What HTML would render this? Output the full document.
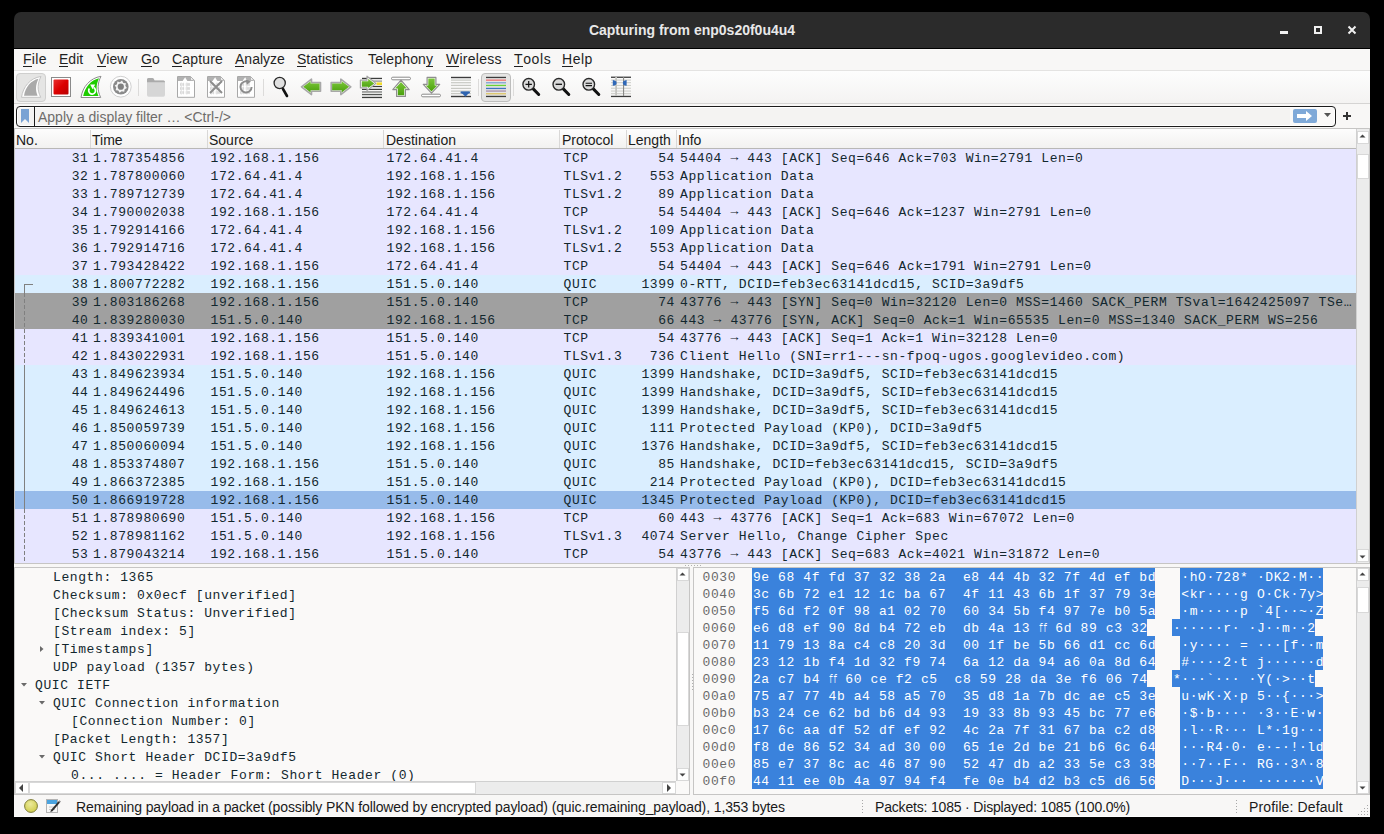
<!DOCTYPE html><html><head><meta charset="utf-8"><style>

*{box-sizing:border-box}
html,body{margin:0;padding:0}
body{width:1384px;height:834px;background:#000;position:relative;overflow:hidden;font-family:"Liberation Sans", sans-serif}
.a{position:absolute}
.m{font-family:"Liberation Mono", monospace;font-size:13px;letter-spacing:0.6px;white-space:pre;color:#12272e}
.s{font-family:"Liberation Sans", sans-serif;white-space:pre}
.row{position:absolute;left:15px;width:1341px;height:18px}
.row span{position:absolute;top:1px;line-height:18px}
.menu span{position:absolute;top:0;font-size:14px;color:#1f1f1f;line-height:20px}
.menu u{text-decoration:none;position:relative}.menu u::after{content:'';position:absolute;left:0;right:0;top:15px;height:1px;background:#1f1f1f}
.hdr span{position:absolute;top:0;font-size:14px;color:#1a1a1a;line-height:19px}
.arr{position:relative;top:-1px;font-weight:bold}
.vsep{position:absolute;width:1px;background:#d9d8d7}
.tsep{position:absolute;width:1px;height:18px;top:79px;background:#d6d5d4}
.sb{position:absolute;background:#ececec;border-left:1px solid #d0d0d0}
.btn{position:absolute;background:#fff;border:1px solid #d8d8d8}
.dl span{position:absolute;line-height:18px}
.hx{position:absolute;line-height:17px}

</style></head><body>
<div class="a" style="left:14px;top:48px;width:1356px;height:769px;background:#f8f7f6"></div>
<div class="a" style="left:14px;top:12px;width:1356px;height:37px;background:#2b2b2b;border-radius:7px 7px 0 0"></div>
<div class="a" style="left:14px;top:48px;width:1356px;height:1px;background:#000"></div>
<div class="a s" style="left:14px;top:20px;width:1356px;text-align:center;color:#e8e8e8;font-weight:bold;font-size:14px;line-height:20px">Capturing from enp0s20f0u4u4</div>
<div class="a" style="left:1280px;top:31px;width:8px;height:3px;background:#f0f0f0"></div>
<div class="a" style="left:1314px;top:26px;width:8px;height:8px;border:2px solid #f0f0f0"></div>
<svg class="a" style="left:1347px;top:25px" width="10" height="10"><path d="M1.5 1.5L8.5 8.5M8.5 1.5L1.5 8.5" stroke="#f0f0f0" stroke-width="2"/></svg>
<div class="a menu s" style="left:0;top:49px;width:1384px;height:21px">
<span style="left:23px;letter-spacing:0.3px"><u>F</u>ile</span>
<span style="left:59px;letter-spacing:0px"><u>E</u>dit</span>
<span style="left:97px;letter-spacing:0px"><u>V</u>iew</span>
<span style="left:141px;letter-spacing:0px"><u>G</u>o</span>
<span style="left:172px;letter-spacing:0.18px"><u>C</u>apture</span>
<span style="left:235px;letter-spacing:0px"><u>A</u>nalyze</span>
<span style="left:297px;letter-spacing:0px"><u>S</u>tatistics</span>
<span style="left:368px;letter-spacing:0.15px">Telephon<u>y</u></span>
<span style="left:446px;letter-spacing:0.25px"><u>W</u>ireless</span>
<span style="left:514px;letter-spacing:0.6px"><u>T</u>ools</span>
<span style="left:562px;letter-spacing:0.5px"><u>H</u>elp</span>
</div>
<div class="a" style="left:14px;top:70px;width:1356px;height:1px;background:#e4e3e2"></div>
<div class="a" style="left:14px;top:71px;width:1356px;height:32px;background:linear-gradient(#fdfdfd,#f4f3f2)"></div>
<div class="a" style="left:14px;top:103px;width:1356px;height:1px;background:#d5d4d3"></div>
<svg class="a" style="left:0;top:0" width="700" height="110" viewBox="0 0 700 110">
<defs><linearGradient id="gr" x1="0" y1="0" x2="0" y2="1"><stop offset="0" stop-color="#7bc63a"/><stop offset="1" stop-color="#4aa00c"/></linearGradient><linearGradient id="rd" x1="0" y1="0" x2="1" y2="1"><stop offset="0" stop-color="#e83030"/><stop offset="0.5" stop-color="#dc0000"/><stop offset="1" stop-color="#b80000"/></linearGradient></defs>
<rect x="16.5" y="73.5" width="29" height="28" rx="3.5" fill="#e5e5e4" stroke="#cfcfce"/>
<path d="M21.5 97.3C23 87 30 78 41 76.5C37.5 83 37 90 40.7 97.3Z" fill="#fff" stroke="#c4c4c4" stroke-width="1"/>
<path d="M24 95.8C25.5 87 31 80.5 38.5 78.8C35.5 85 35.3 90 37.6 95.8Z" fill="#aaa"/>
<rect x="51.5" y="77.5" width="19" height="19" fill="#fff" stroke="#8a8a8a"/>
<rect x="53.5" y="79.5" width="15" height="15" rx="1" fill="url(#rd)"/>
<path d="M81 97.5C82.5 87 90 78 101 76.3C97.5 83 97 90 100.7 97.5Z" fill="#fff" stroke="#8c8c8c" stroke-width="1"/>
<path d="M83.2 96C85 87 91 80 99 78.2C96 85 95.8 90 98.5 96Z" fill="#1ecc00"/>
<path d="M89.4 88.6A3.4 3.4 0 1 0 93.6 87.6" stroke="#fff" stroke-width="1.7" fill="none"/>
<path d="M90.2 84.6L95.2 84.4L92.6 89.2Z" fill="#fff"/>
<circle cx="120.8" cy="86.7" r="10.4" fill="#fff" stroke="#cfcfcf" stroke-width="1"/>
<circle cx="120.8" cy="86.7" r="7.8" fill="#8a8a8a"/>
<path d="M126.88 87.91 L124.62 89.26 L124.24 91.86 L121.70 91.21 L119.59 92.78 L118.24 90.52 L115.64 90.14 L116.29 87.60 L114.72 85.49 L116.98 84.14 L117.36 81.54 L119.90 82.19 L122.01 80.62 L123.36 82.88 L125.96 83.26 L125.31 85.80Z" fill="#f4f4f4"/>
<circle cx="120.8" cy="86.7" r="3.1" fill="#808080"/>
<rect x="138.0" y="79" width="1" height="17" fill="#dcdbda"/>
<rect x="263.0" y="79" width="1" height="17" fill="#dcdbda"/>
<rect x="478.0" y="79" width="1" height="17" fill="#dcdbda"/>
<rect x="513.0" y="79" width="1" height="17" fill="#dcdbda"/>
<path d="M147 79.5Q147 78 148.5 78H152.5Q154 78 154.5 80.5H163.5Q165 80.5 165 82V95Q165 96.7 163.3 96.7H148.7Q147 96.7 147 95Z" fill="#d6d6d6"/>
<path d="M147 79.5Q147 78 148.5 78H152.5Q154 78 154.5 80.5H163.5Q165 80.5 165 82V82.3H147Z" fill="#ababab"/>
<path d="M177.5 76.5H190.5L194.5 80.5V97.3H177.5Z" fill="#fff" stroke="#a8a8a8" stroke-width="1"/><path d="M178.0 77H190.2L194.0 81H178.0Z" fill="#b2b2b2"/><path d="M182.5 81.2C183.5 79 184.5 78.5 185.3 77.2C185.6 78.5 186.5 79.5 187.5 81.2Z" fill="#fff"/><path d="M190.5 76.8V80.2H194.2Z" fill="#fff" stroke="#a8a8a8" stroke-width="0.8" stroke-linejoin="round"/><rect x="180.5" y="83.0" width="1.4" height="3" rx="0.6" fill="none" stroke="#d2d2d2" stroke-width="0.9"/><rect x="183.0" y="83.0" width="0.6" height="3" rx="0.6" fill="none" stroke="#d2d2d2" stroke-width="0.9"/><rect x="186.2" y="83.0" width="1.4" height="3" rx="0.6" fill="none" stroke="#d2d2d2" stroke-width="0.9"/><rect x="188.7" y="83.0" width="0.6" height="3" rx="0.6" fill="none" stroke="#d2d2d2" stroke-width="0.9"/><rect x="180.5" y="87.0" width="1.4" height="3" rx="0.6" fill="none" stroke="#d2d2d2" stroke-width="0.9"/><rect x="183.0" y="87.0" width="0.6" height="3" rx="0.6" fill="none" stroke="#d2d2d2" stroke-width="0.9"/><rect x="186.2" y="87.0" width="1.4" height="3" rx="0.6" fill="none" stroke="#d2d2d2" stroke-width="0.9"/><rect x="188.7" y="87.0" width="0.6" height="3" rx="0.6" fill="none" stroke="#d2d2d2" stroke-width="0.9"/><rect x="180.5" y="91.0" width="1.4" height="3" rx="0.6" fill="none" stroke="#d2d2d2" stroke-width="0.9"/><rect x="183.0" y="91.0" width="0.6" height="3" rx="0.6" fill="none" stroke="#d2d2d2" stroke-width="0.9"/><rect x="186.2" y="91.0" width="1.4" height="3" rx="0.6" fill="none" stroke="#d2d2d2" stroke-width="0.9"/><rect x="188.7" y="91.0" width="0.6" height="3" rx="0.6" fill="none" stroke="#d2d2d2" stroke-width="0.9"/>
<path d="M207.5 76.5H220.5L224.5 80.5V97.3H207.5Z" fill="#fff" stroke="#a8a8a8" stroke-width="1"/><path d="M208.0 77H220.2L224.0 81H208.0Z" fill="#b2b2b2"/><path d="M212.5 81.2C213.5 79 214.5 78.5 215.3 77.2C215.6 78.5 216.5 79.5 217.5 81.2Z" fill="#fff"/><path d="M220.5 76.8V80.2H224.2Z" fill="#fff" stroke="#a8a8a8" stroke-width="0.8" stroke-linejoin="round"/><rect x="210.5" y="83.0" width="1.4" height="3" rx="0.6" fill="none" stroke="#d2d2d2" stroke-width="0.9"/><rect x="213.0" y="83.0" width="0.6" height="3" rx="0.6" fill="none" stroke="#d2d2d2" stroke-width="0.9"/><rect x="216.2" y="83.0" width="1.4" height="3" rx="0.6" fill="none" stroke="#d2d2d2" stroke-width="0.9"/><rect x="218.7" y="83.0" width="0.6" height="3" rx="0.6" fill="none" stroke="#d2d2d2" stroke-width="0.9"/><rect x="210.5" y="87.0" width="1.4" height="3" rx="0.6" fill="none" stroke="#d2d2d2" stroke-width="0.9"/><rect x="213.0" y="87.0" width="0.6" height="3" rx="0.6" fill="none" stroke="#d2d2d2" stroke-width="0.9"/><rect x="216.2" y="87.0" width="1.4" height="3" rx="0.6" fill="none" stroke="#d2d2d2" stroke-width="0.9"/><rect x="218.7" y="87.0" width="0.6" height="3" rx="0.6" fill="none" stroke="#d2d2d2" stroke-width="0.9"/><rect x="210.5" y="91.0" width="1.4" height="3" rx="0.6" fill="none" stroke="#d2d2d2" stroke-width="0.9"/><rect x="213.0" y="91.0" width="0.6" height="3" rx="0.6" fill="none" stroke="#d2d2d2" stroke-width="0.9"/><rect x="216.2" y="91.0" width="1.4" height="3" rx="0.6" fill="none" stroke="#d2d2d2" stroke-width="0.9"/><rect x="218.7" y="91.0" width="0.6" height="3" rx="0.6" fill="none" stroke="#d2d2d2" stroke-width="0.9"/><path d="M210 81L222 93M222 81L210 93" stroke="#8c8c8c" stroke-width="2"/>
<path d="M237.5 76.5H250.5L254.5 80.5V97.3H237.5Z" fill="#fff" stroke="#a8a8a8" stroke-width="1"/><path d="M238.0 77H250.2L254.0 81H238.0Z" fill="#b2b2b2"/><path d="M242.5 81.2C243.5 79 244.5 78.5 245.3 77.2C245.6 78.5 246.5 79.5 247.5 81.2Z" fill="#fff"/><path d="M250.5 76.8V80.2H254.2Z" fill="#fff" stroke="#a8a8a8" stroke-width="0.8" stroke-linejoin="round"/><rect x="240.5" y="83.0" width="1.4" height="3" rx="0.6" fill="none" stroke="#d2d2d2" stroke-width="0.9"/><rect x="243.0" y="83.0" width="0.6" height="3" rx="0.6" fill="none" stroke="#d2d2d2" stroke-width="0.9"/><rect x="246.2" y="83.0" width="1.4" height="3" rx="0.6" fill="none" stroke="#d2d2d2" stroke-width="0.9"/><rect x="248.7" y="83.0" width="0.6" height="3" rx="0.6" fill="none" stroke="#d2d2d2" stroke-width="0.9"/><rect x="240.5" y="87.0" width="1.4" height="3" rx="0.6" fill="none" stroke="#d2d2d2" stroke-width="0.9"/><rect x="243.0" y="87.0" width="0.6" height="3" rx="0.6" fill="none" stroke="#d2d2d2" stroke-width="0.9"/><rect x="246.2" y="87.0" width="1.4" height="3" rx="0.6" fill="none" stroke="#d2d2d2" stroke-width="0.9"/><rect x="248.7" y="87.0" width="0.6" height="3" rx="0.6" fill="none" stroke="#d2d2d2" stroke-width="0.9"/><rect x="240.5" y="91.0" width="1.4" height="3" rx="0.6" fill="none" stroke="#d2d2d2" stroke-width="0.9"/><rect x="243.0" y="91.0" width="0.6" height="3" rx="0.6" fill="none" stroke="#d2d2d2" stroke-width="0.9"/><rect x="246.2" y="91.0" width="1.4" height="3" rx="0.6" fill="none" stroke="#d2d2d2" stroke-width="0.9"/><rect x="248.7" y="91.0" width="0.6" height="3" rx="0.6" fill="none" stroke="#d2d2d2" stroke-width="0.9"/><path d="M249 82.2A5.6 5.6 0 1 0 251.6 87" stroke="#8c8c8c" stroke-width="2" fill="none"/><path d="M245.8 79.5L251 81.5L246.8 84.8Z" fill="#8c8c8c"/>
<path d="M283 89L287 96" stroke="#111" stroke-width="2.6" stroke-linecap="round"/>
<circle cx="279.7" cy="83" r="5.6" fill="#e0e0e0" stroke="#2a2a2a" stroke-width="1.3"/>
<path d="M301.5 86.8L311.5 79.2V82.6H320.5V91.2H311.5V94.6Z" fill="#fff" stroke="#a8a8a8" stroke-width="1.6" stroke-linejoin="round"/>
<path d="M303.2 86.8L310.6 81.2V83.5H319.6V90.3H310.6V92.6Z" fill="url(#gr)"/>
<path d="M350.8 86.8L340.8 79.2V82.6H331.2V91.2H340.8V94.6Z" fill="#fff" stroke="#a8a8a8" stroke-width="1.6" stroke-linejoin="round"/>
<path d="M349.1 86.8L341.7 81.2V83.5H332.1V90.3H341.7V92.6Z" fill="url(#gr)"/>
<rect x="362" y="77.8" width="20" height="1.3" fill="#3c3e3c"/>
<rect x="362" y="80.5" width="20" height="1.2" fill="#8c8e8c"/>
<rect x="362" y="85.9" width="20" height="1.2" fill="#3c3e3c"/>
<rect x="362" y="88.8" width="20" height="1.2" fill="#3c3e3c"/>
<rect x="362" y="91.2" width="20" height="1.5" fill="#8a8c8a"/>
<rect x="362" y="93.9" width="20" height="1.3" fill="#555755"/>
<rect x="362" y="96.8" width="20" height="1.3" fill="#3c3e3c"/>
<rect x="376.5" y="82.4" width="5.5" height="2.6" fill="#f2dc2a"/>
<path d="M360.4 80.2H367V76.2L375.9 83.4L367 90.6V87.9H360.4Z" fill="#fff" stroke="#a4a4a4" stroke-width="1.2" stroke-linejoin="round"/>
<path d="M361.8 81.3H368.2V78.8L374.2 83.4L368.2 88.1V86.7H361.8Z" fill="url(#gr)"/>
<rect x="391.5" y="77.2" width="19" height="2.6" rx="1.3" fill="#fff" stroke="#8a8a8a" stroke-width="1"/>
<path d="M401 80.2L409.2 89.6H405.4V96.4H396.6V89.6H392.8Z" fill="#fff" stroke="#8e8e8e" stroke-width="1.2" stroke-linejoin="round"/>
<path d="M401 82L406.8 88.6H404.2V95.2H397.8V88.6H395.2Z" fill="url(#gr)"/>
<path d="M431.5 93.2L439.7 84.4H435.9V77.4H427.1V84.4H423.3Z" fill="#fff" stroke="#8e8e8e" stroke-width="1.2" stroke-linejoin="round"/>
<path d="M431.5 91.6L437.3 85.4H434.7V78.6H428.3V85.4H425.7Z" fill="url(#gr)"/>
<rect x="421.5" y="94.2" width="19" height="2.6" rx="1.3" fill="#fff" stroke="#8a8a8a" stroke-width="1"/>
<rect x="451" y="76.8" width="20" height="1.4" fill="#3c3c3c"/>
<rect x="451" y="79.5" width="20" height="1.2" fill="#c8c9c4"/>
<rect x="451" y="82.1" width="20" height="1.2" fill="#c8c9c4"/>
<rect x="451" y="84.8" width="20" height="1.2" fill="#c8c9c4"/>
<rect x="451" y="87.8" width="20" height="1.2" fill="#c8c9c4"/>
<rect x="451" y="90.5" width="20" height="1.2" fill="#c8c9c4"/>
<rect x="451" y="93.0" width="20" height="1.2" fill="#c8c9c4"/>
<rect x="451" y="95.8" width="20" height="1.4" fill="#3c3c3c"/>
<path d="M460.5 91.8H470L465.5 96.8Z" fill="#2f64b0"/><rect x="460.5" y="91.6" width="9.5" height="2" rx="1" fill="#2f64b0"/>
<rect x="481.5" y="73.5" width="29" height="28" rx="3.5" fill="#e5e5e4" stroke="#bdbdbc"/>
<rect x="486" y="76.8" width="20" height="1.3" fill="#3c3c3c"/>
<rect x="486" y="79.5" width="20" height="1.3" fill="#f07070"/>
<rect x="486" y="82.1" width="20" height="1.3" fill="#80a4d4"/>
<rect x="486" y="84.8" width="20" height="1.3" fill="#6ad336"/>
<rect x="486" y="87.8" width="20" height="1.3" fill="#3e74c0"/>
<rect x="486" y="90.4" width="20" height="1.3" fill="#a68fae"/>
<rect x="486" y="93.1" width="20" height="1.3" fill="#dcc464"/>
<rect x="486" y="95.8" width="20" height="1.3" fill="#3c3c3c"/>
<path d="M533.2 88.9L538.7 94.5" stroke="#111" stroke-width="3" stroke-linecap="round"/>
<circle cx="528.7" cy="84.3" r="5.8" fill="#dadada" stroke="#2a2a2a" stroke-width="1.4"/>
<path d="M525.5 84.3H531.9M528.7 81V87.6" stroke="#111" stroke-width="1.2"/>
<path d="M563.3 88.9L568.8 94.5" stroke="#111" stroke-width="3" stroke-linecap="round"/>
<circle cx="558.8" cy="84.3" r="5.8" fill="#dadada" stroke="#2a2a2a" stroke-width="1.4"/>
<path d="M555.6 84.3H562.0" stroke="#111" stroke-width="1.3"/>
<path d="M593.3 88.9L598.8 94.5" stroke="#111" stroke-width="3" stroke-linecap="round"/>
<circle cx="588.8" cy="84.3" r="5.8" fill="#dadada" stroke="#2a2a2a" stroke-width="1.4"/>
<path d="M585.6 83.2H592.0M585.6 85.6H592.0" stroke="#111" stroke-width="1.1"/>
<rect x="611" y="76.6" width="20" height="1.3" fill="#3c3c3c"/>
<rect x="611" y="79.5" width="20" height="1.1" fill="#cfd0cb"/>
<rect x="611" y="82.1" width="20" height="1.1" fill="#cfd0cb"/>
<rect x="611" y="84.9" width="20" height="1.1" fill="#cfd0cb"/>
<rect x="611" y="87.7" width="20" height="1.1" fill="#cfd0cb"/>
<rect x="611" y="90.5" width="20" height="1.1" fill="#cfd0cb"/>
<rect x="611" y="93.1" width="20" height="1.1" fill="#cfd0cb"/>
<rect x="611" y="95.8" width="20" height="1.3" fill="#3c3c3c"/>
<rect x="615.2" y="77" width="1.8" height="19" fill="#c4c4c0"/><rect x="623" y="77" width="1.1" height="19" fill="#8a8a88"/>
<path d="M612.8 80Q616.6 80.6 616.6 82.9Q616.6 85.2 612.8 85.8Z" fill="#2f68b8"/><path d="M626.6 80Q622.8 80.6 622.8 82.9Q622.8 85.2 626.6 85.8Z" fill="#2f68b8"/>
</svg>
<div class="a" style="left:16px;top:106px;width:1320px;height:21px;border:1px solid #1c1c1c;border-radius:4px;background:#f4f3f2;box-shadow:inset 0 0 0 1px #fff"></div>
<div class="a" style="left:1290px;top:108px;width:44px;height:17px;background:#faf9f8"></div>
<div class="a" style="left:34px;top:107px;width:1px;height:19px;background:#1c1c1c"></div>
<svg class="a" style="left:20px;top:109px" width="10" height="15"><path d="M1 0H9V14L5 10L1 14Z" fill="#7aa3d4"/></svg>
<div class="a s" style="left:38px;top:108px;font-size:14px;line-height:19px;color:#6e6c6a">Apply a display filter … &lt;Ctrl-/&gt;</div>
<div class="a" style="left:1293px;top:109px;width:24px;height:14px;background:#7fa9d8;border-radius:2px"></div>
<svg class="a" style="left:1293px;top:109px" width="24" height="14"><path d="M4 5H13V2L19 7L13 12V9H4Z" fill="#fff"/></svg>
<svg class="a" style="left:1324px;top:113px" width="8" height="5"><path d="M0 0H7L3.5 4Z" fill="#555"/></svg>
<svg class="a" style="left:1342px;top:111px" width="10" height="10"><path d="M5 1V9M1 5H9" stroke="#333" stroke-width="2"/></svg>
<div class="a" style="left:14px;top:128px;width:1356px;height:436px;background:#fff;border:1px solid #c6c5c4"></div>
<div class="a" style="left:15px;top:129px;width:1341px;height:20px;background:linear-gradient(#fdfdfd,#f2f1f0);border-bottom:1px solid #b8b7b6"></div>
<div class="a hdr s" style="left:0;top:131px;width:1384px;height:18px">
<span style="left:16px">No.</span>
<span style="left:92px">Time</span>
<span style="left:209px">Source</span>
<span style="left:386px">Destination</span>
<span style="left:562px">Protocol</span>
<span style="left:628px">Length</span>
<span style="left:678px">Info</span>
</div>
<div class="vsep" style="left:90px;top:130px;height:18px"></div>
<div class="vsep" style="left:207px;top:130px;height:18px"></div>
<div class="vsep" style="left:383px;top:130px;height:18px"></div>
<div class="vsep" style="left:559px;top:130px;height:18px"></div>
<div class="vsep" style="left:626px;top:130px;height:18px"></div>
<div class="vsep" style="left:676px;top:130px;height:18px"></div>
<div class="row m" style="top:149px;background:#e7e6ff">
<span style="right:1267.5px">31</span>
<span style="left:78.0px">1.787354856</span>
<span style="left:195.5px">192.168.1.156</span>
<span style="left:371.5px">172.64.41.4</span>
<span style="left:548.5px">TCP</span>
<span style="right:681.0px">54</span>
<span style="left:665.0px">54404 <b class="arr">→</b> 443 [ACK] Seq=646 Ack=703 Win=2791 Len=0</span>
</div>
<div class="row m" style="top:167px;background:#e7e6ff">
<span style="right:1267.5px">32</span>
<span style="left:78.0px">1.787800060</span>
<span style="left:195.5px">172.64.41.4</span>
<span style="left:371.5px">192.168.1.156</span>
<span style="left:548.5px">TLSv1.2</span>
<span style="right:681.0px">553</span>
<span style="left:665.0px">Application Data</span>
</div>
<div class="row m" style="top:185px;background:#e7e6ff">
<span style="right:1267.5px">33</span>
<span style="left:78.0px">1.789712739</span>
<span style="left:195.5px">172.64.41.4</span>
<span style="left:371.5px">192.168.1.156</span>
<span style="left:548.5px">TLSv1.2</span>
<span style="right:681.0px">89</span>
<span style="left:665.0px">Application Data</span>
</div>
<div class="row m" style="top:203px;background:#e7e6ff">
<span style="right:1267.5px">34</span>
<span style="left:78.0px">1.790002038</span>
<span style="left:195.5px">192.168.1.156</span>
<span style="left:371.5px">172.64.41.4</span>
<span style="left:548.5px">TCP</span>
<span style="right:681.0px">54</span>
<span style="left:665.0px">54404 <b class="arr">→</b> 443 [ACK] Seq=646 Ack=1237 Win=2791 Len=0</span>
</div>
<div class="row m" style="top:221px;background:#e7e6ff">
<span style="right:1267.5px">35</span>
<span style="left:78.0px">1.792914166</span>
<span style="left:195.5px">172.64.41.4</span>
<span style="left:371.5px">192.168.1.156</span>
<span style="left:548.5px">TLSv1.2</span>
<span style="right:681.0px">109</span>
<span style="left:665.0px">Application Data</span>
</div>
<div class="row m" style="top:239px;background:#e7e6ff">
<span style="right:1267.5px">36</span>
<span style="left:78.0px">1.792914716</span>
<span style="left:195.5px">172.64.41.4</span>
<span style="left:371.5px">192.168.1.156</span>
<span style="left:548.5px">TLSv1.2</span>
<span style="right:681.0px">553</span>
<span style="left:665.0px">Application Data</span>
</div>
<div class="row m" style="top:257px;background:#e7e6ff">
<span style="right:1267.5px">37</span>
<span style="left:78.0px">1.793428422</span>
<span style="left:195.5px">192.168.1.156</span>
<span style="left:371.5px">172.64.41.4</span>
<span style="left:548.5px">TCP</span>
<span style="right:681.0px">54</span>
<span style="left:665.0px">54404 <b class="arr">→</b> 443 [ACK] Seq=646 Ack=1791 Win=2791 Len=0</span>
</div>
<div class="row m" style="top:275px;background:#daeeff">
<span style="right:1267.5px">38</span>
<span style="left:78.0px">1.800772282</span>
<span style="left:195.5px">192.168.1.156</span>
<span style="left:371.5px">151.5.0.140</span>
<span style="left:548.5px">QUIC</span>
<span style="right:681.0px">1399</span>
<span style="left:665.0px">0-RTT, DCID=feb3ec63141dcd15, SCID=3a9df5</span>
</div>
<div class="row m" style="top:293px;background:#a0a0a0">
<span style="right:1267.5px">39</span>
<span style="left:78.0px">1.803186268</span>
<span style="left:195.5px">192.168.1.156</span>
<span style="left:371.5px">151.5.0.140</span>
<span style="left:548.5px">TCP</span>
<span style="right:681.0px">74</span>
<span style="left:665.0px">43776 <b class="arr">→</b> 443 [SYN] Seq=0 Win=32120 Len=0 MSS=1460 SACK_PERM TSval=1642425097 TSe…</span>
</div>
<div class="row m" style="top:311px;background:#a0a0a0">
<span style="right:1267.5px">40</span>
<span style="left:78.0px">1.839280030</span>
<span style="left:195.5px">151.5.0.140</span>
<span style="left:371.5px">192.168.1.156</span>
<span style="left:548.5px">TCP</span>
<span style="right:681.0px">66</span>
<span style="left:665.0px">443 <b class="arr">→</b> 43776 [SYN, ACK] Seq=0 Ack=1 Win=65535 Len=0 MSS=1340 SACK_PERM WS=256</span>
</div>
<div class="row m" style="top:329px;background:#e7e6ff">
<span style="right:1267.5px">41</span>
<span style="left:78.0px">1.839341001</span>
<span style="left:195.5px">192.168.1.156</span>
<span style="left:371.5px">151.5.0.140</span>
<span style="left:548.5px">TCP</span>
<span style="right:681.0px">54</span>
<span style="left:665.0px">43776 <b class="arr">→</b> 443 [ACK] Seq=1 Ack=1 Win=32128 Len=0</span>
</div>
<div class="row m" style="top:347px;background:#e7e6ff">
<span style="right:1267.5px">42</span>
<span style="left:78.0px">1.843022931</span>
<span style="left:195.5px">192.168.1.156</span>
<span style="left:371.5px">151.5.0.140</span>
<span style="left:548.5px">TLSv1.3</span>
<span style="right:681.0px">736</span>
<span style="left:665.0px">Client Hello (SNI=rr1---sn-fpoq-ugos.googlevideo.com)</span>
</div>
<div class="row m" style="top:365px;background:#daeeff">
<span style="right:1267.5px">43</span>
<span style="left:78.0px">1.849623934</span>
<span style="left:195.5px">151.5.0.140</span>
<span style="left:371.5px">192.168.1.156</span>
<span style="left:548.5px">QUIC</span>
<span style="right:681.0px">1399</span>
<span style="left:665.0px">Handshake, DCID=3a9df5, SCID=feb3ec63141dcd15</span>
</div>
<div class="row m" style="top:383px;background:#daeeff">
<span style="right:1267.5px">44</span>
<span style="left:78.0px">1.849624496</span>
<span style="left:195.5px">151.5.0.140</span>
<span style="left:371.5px">192.168.1.156</span>
<span style="left:548.5px">QUIC</span>
<span style="right:681.0px">1399</span>
<span style="left:665.0px">Handshake, DCID=3a9df5, SCID=feb3ec63141dcd15</span>
</div>
<div class="row m" style="top:401px;background:#daeeff">
<span style="right:1267.5px">45</span>
<span style="left:78.0px">1.849624613</span>
<span style="left:195.5px">151.5.0.140</span>
<span style="left:371.5px">192.168.1.156</span>
<span style="left:548.5px">QUIC</span>
<span style="right:681.0px">1399</span>
<span style="left:665.0px">Handshake, DCID=3a9df5, SCID=feb3ec63141dcd15</span>
</div>
<div class="row m" style="top:419px;background:#daeeff">
<span style="right:1267.5px">46</span>
<span style="left:78.0px">1.850059739</span>
<span style="left:195.5px">151.5.0.140</span>
<span style="left:371.5px">192.168.1.156</span>
<span style="left:548.5px">QUIC</span>
<span style="right:681.0px">111</span>
<span style="left:665.0px">Protected Payload (KP0), DCID=3a9df5</span>
</div>
<div class="row m" style="top:437px;background:#daeeff">
<span style="right:1267.5px">47</span>
<span style="left:78.0px">1.850060094</span>
<span style="left:195.5px">151.5.0.140</span>
<span style="left:371.5px">192.168.1.156</span>
<span style="left:548.5px">QUIC</span>
<span style="right:681.0px">1376</span>
<span style="left:665.0px">Handshake, DCID=3a9df5, SCID=feb3ec63141dcd15</span>
</div>
<div class="row m" style="top:455px;background:#daeeff">
<span style="right:1267.5px">48</span>
<span style="left:78.0px">1.853374807</span>
<span style="left:195.5px">192.168.1.156</span>
<span style="left:371.5px">151.5.0.140</span>
<span style="left:548.5px">QUIC</span>
<span style="right:681.0px">85</span>
<span style="left:665.0px">Handshake, DCID=feb3ec63141dcd15, SCID=3a9df5</span>
</div>
<div class="row m" style="top:473px;background:#daeeff">
<span style="right:1267.5px">49</span>
<span style="left:78.0px">1.866372385</span>
<span style="left:195.5px">192.168.1.156</span>
<span style="left:371.5px">151.5.0.140</span>
<span style="left:548.5px">QUIC</span>
<span style="right:681.0px">214</span>
<span style="left:665.0px">Protected Payload (KP0), DCID=feb3ec63141dcd15</span>
</div>
<div class="row m" style="top:491px;background:#97bbea">
<span style="right:1267.5px">50</span>
<span style="left:78.0px">1.866919728</span>
<span style="left:195.5px">192.168.1.156</span>
<span style="left:371.5px">151.5.0.140</span>
<span style="left:548.5px">QUIC</span>
<span style="right:681.0px">1345</span>
<span style="left:665.0px">Protected Payload (KP0), DCID=feb3ec63141dcd15</span>
</div>
<div class="row m" style="top:509px;background:#e7e6ff">
<span style="right:1267.5px">51</span>
<span style="left:78.0px">1.878980690</span>
<span style="left:195.5px">151.5.0.140</span>
<span style="left:371.5px">192.168.1.156</span>
<span style="left:548.5px">TCP</span>
<span style="right:681.0px">60</span>
<span style="left:665.0px">443 <b class="arr">→</b> 43776 [ACK] Seq=1 Ack=683 Win=67072 Len=0</span>
</div>
<div class="row m" style="top:527px;background:#e7e6ff">
<span style="right:1267.5px">52</span>
<span style="left:78.0px">1.878981162</span>
<span style="left:195.5px">151.5.0.140</span>
<span style="left:371.5px">192.168.1.156</span>
<span style="left:548.5px">TLSv1.3</span>
<span style="right:681.0px">4074</span>
<span style="left:665.0px">Server Hello, Change Cipher Spec</span>
</div>
<div class="row m" style="top:545px;background:#e7e6ff">
<span style="right:1267.5px">53</span>
<span style="left:78.0px">1.879043214</span>
<span style="left:195.5px">192.168.1.156</span>
<span style="left:371.5px">151.5.0.140</span>
<span style="left:548.5px">TCP</span>
<span style="right:681.0px">54</span>
<span style="left:665.0px">43776 <b class="arr">→</b> 443 [ACK] Seq=683 Ack=4021 Win=31872 Len=0</span>
</div>
<svg class="a" style="left:15px;top:149px" width="20" height="414">
<path d="M9.5 135.5H18M9.5 135V144" stroke="#808080" stroke-width="1" fill="none"/>
<path d="M9.5 144V216" stroke="#808080" stroke-width="1" stroke-dasharray="4 2" fill="none"/>
<path d="M9.5 216V360" stroke="#808080" stroke-width="1" fill="none"/>
<path d="M9.5 360V414" stroke="#808080" stroke-width="1" stroke-dasharray="4 2" fill="none"/>
</svg>
<div class="sb" style="left:1356px;top:129px;width:13px;height:434px"></div>
<div class="btn" style="left:1357px;top:131px;width:12px;height:13px"></div>
<svg class="a" style="left:1359px;top:134px" width="7" height="4"><path d="M0.5 3.5H6.5L3.5 0.5Z" fill="#444"/></svg>
<div class="btn" style="left:1357px;top:154px;width:12px;height:25px"></div>
<div class="btn" style="left:1357px;top:549px;width:12px;height:13px"></div>
<svg class="a" style="left:1359px;top:555px" width="7" height="4"><path d="M0.5 0.5H6.5L3.5 3.5Z" fill="#444"/></svg>
<div class="a" style="left:14px;top:564px;width:1356px;height:3px;background:#f8f7f6"></div>
<div class="a" style="left:685px;top:565px;width:1px;height:1px;background:#b0b0b0"></div>
<div class="a" style="left:688px;top:565px;width:1px;height:1px;background:#b0b0b0"></div>
<div class="a" style="left:691px;top:565px;width:1px;height:1px;background:#b0b0b0"></div>
<div class="a" style="left:694px;top:565px;width:1px;height:1px;background:#b0b0b0"></div>
<div class="a" style="left:697px;top:565px;width:1px;height:1px;background:#b0b0b0"></div>
<div class="a" style="left:700px;top:565px;width:1px;height:1px;background:#b0b0b0"></div>
<div class="a" style="left:14px;top:567px;width:676px;height:228px;background:#faf9f8;border:1px solid #c6c5c4"></div>
<div class="a dl m" style="left:0;top:0;width:676px;height:781px;overflow:hidden">
<span style="left:53px;top:569px">Length: 1365</span>
<span style="left:53px;top:587px">Checksum: 0x0ecf [unverified]</span>
<span style="left:53px;top:605px">[Checksum Status: Unverified]</span>
<span style="left:53px;top:623px">[Stream index: 5]</span>
<span style="left:53px;top:641px">[Timestamps]</span>
<span style="left:53px;top:659px">UDP payload (1357 bytes)</span>
<span style="left:35px;top:677px">QUIC IETF</span>
<span style="left:53px;top:695px">QUIC Connection information</span>
<span style="left:71px;top:713px">[Connection Number: 0]</span>
<span style="left:53px;top:731px">[Packet Length: 1357]</span>
<span style="left:53px;top:749px">QUIC Short Header DCID=3a9df5</span>
<span style="left:71px;top:767px">0... .... = Header Form: Short Header (0)</span>
</div>
<svg class="a" style="left:39px;top:645px" width="6" height="8"><path d="M1 1V7L4.5 4Z" fill="#6a6a6a"/></svg>
<svg class="a" style="left:20px;top:682px" width="8" height="6"><path d="M1 1H7L4 4.5Z" fill="#6a6a6a"/></svg>
<svg class="a" style="left:38px;top:700px" width="8" height="6"><path d="M1 1H7L4 4.5Z" fill="#6a6a6a"/></svg>
<svg class="a" style="left:38px;top:754px" width="8" height="6"><path d="M1 1H7L4 4.5Z" fill="#6a6a6a"/></svg>
<div class="sb" style="left:676px;top:568px;width:13px;height:213px"></div>
<div class="btn" style="left:677px;top:568px;width:12px;height:13px"></div>
<svg class="a" style="left:679px;top:572px" width="7" height="4"><path d="M0.5 3.5H6.5L3.5 0.5Z" fill="#444"/></svg>
<div class="btn" style="left:677px;top:632px;width:12px;height:94px"></div>
<div class="a" style="left:692px;top:674px;width:1px;height:1px;background:#b0b0b0"></div>
<div class="a" style="left:692px;top:677px;width:1px;height:1px;background:#b0b0b0"></div>
<div class="a" style="left:692px;top:680px;width:1px;height:1px;background:#b0b0b0"></div>
<div class="a" style="left:692px;top:683px;width:1px;height:1px;background:#b0b0b0"></div>
<div class="a" style="left:692px;top:686px;width:1px;height:1px;background:#b0b0b0"></div>
<div class="a" style="left:692px;top:689px;width:1px;height:1px;background:#b0b0b0"></div>
<div class="btn" style="left:677px;top:768px;width:12px;height:13px"></div>
<svg class="a" style="left:679px;top:773px" width="7" height="4"><path d="M0.5 0.5H6.5L3.5 3.5Z" fill="#444"/></svg>
<div class="a" style="left:15px;top:781px;width:661px;height:13px;background:#ececec;border-top:1px solid #d0d0d0"></div>
<div class="btn" style="left:15px;top:782px;width:14px;height:12px"></div>
<svg class="a" style="left:19px;top:784px" width="5" height="8"><path d="M4 0V8L0 4Z" fill="#444"/></svg>
<div class="btn" style="left:29px;top:782px;width:447px;height:12px"></div>
<div class="btn" style="left:662px;top:782px;width:14px;height:12px"></div>
<svg class="a" style="left:667px;top:784px" width="5" height="8"><path d="M0 0V8L4 4Z" fill="#444"/></svg>
<div class="a" style="left:693px;top:567px;width:677px;height:228px;background:#faf9f8;border:1px solid #c6c5c4"></div>
<span class="hx m" style="left:702.5px;top:569px;color:#6a6a6a">0030</span>
<div class="a" style="left:751.9px;top:568px;width:403.2px;height:17px;background:#3a82dc"></div>
<div class="a" style="left:1180.3px;top:568px;width:142.8px;height:17px;background:#3a82dc"></div>
<span class="hx m" style="left:752.9px;top:569px;color:#fff">9e 68 4f fd 37 32 38 2a  e8 44 4b 32 7f 4d ef bd</span>
<span class="hx m" style="left:1181.3px;top:569px;color:#fff">·hO·728* ·DK2·M··</span>
<span class="hx m" style="left:702.5px;top:586px;color:#6a6a6a">0040</span>
<div class="a" style="left:751.9px;top:585px;width:403.2px;height:17px;background:#3a82dc"></div>
<div class="a" style="left:1180.3px;top:585px;width:142.8px;height:17px;background:#3a82dc"></div>
<span class="hx m" style="left:752.9px;top:586px;color:#fff">3c 6b 72 e1 12 1c ba 67  4f 11 43 6b 1f 37 79 3e</span>
<span class="hx m" style="left:1181.3px;top:586px;color:#fff">&lt;kr····g O·Ck·7y&gt;</span>
<span class="hx m" style="left:702.5px;top:603px;color:#6a6a6a">0050</span>
<div class="a" style="left:751.9px;top:602px;width:403.2px;height:17px;background:#3a82dc"></div>
<div class="a" style="left:1180.3px;top:602px;width:142.8px;height:17px;background:#3a82dc"></div>
<span class="hx m" style="left:752.9px;top:603px;color:#fff">f5 6d f2 0f 98 a1 02 70  60 34 5b f4 97 7e b0 5a</span>
<span class="hx m" style="left:1181.3px;top:603px;color:#fff">·m·····p `4[··~·Z</span>
<span class="hx m" style="left:702.5px;top:620px;color:#6a6a6a">0060</span>
<div class="a" style="left:751.9px;top:619px;width:394.8px;height:17px;background:#3a82dc"></div>
<div class="a" style="left:1171.9px;top:619px;width:142.8px;height:17px;background:#3a82dc"></div>
<span class="hx m" style="left:752.9px;top:620px;color:#fff">e6 d8 ef 90 8d b4 72 eb  db 4a 13 <span style="display:inline-block;width:8.4px;vertical-align:top"><span style="display:inline-block;transform:scaleX(0.52);transform-origin:0 0">ff</span></span> 6d 89 c3 32</span>
<span class="hx m" style="left:1172.9px;top:620px;color:#fff">······r· ·J··m··2</span>
<span class="hx m" style="left:702.5px;top:637px;color:#6a6a6a">0070</span>
<div class="a" style="left:751.9px;top:636px;width:403.2px;height:17px;background:#3a82dc"></div>
<div class="a" style="left:1180.3px;top:636px;width:142.8px;height:17px;background:#3a82dc"></div>
<span class="hx m" style="left:752.9px;top:637px;color:#fff">11 79 13 8a c4 c8 20 3d  00 1f be 5b 66 d1 cc 6d</span>
<span class="hx m" style="left:1181.3px;top:637px;color:#fff">·y···· = ···[f··m</span>
<span class="hx m" style="left:702.5px;top:654px;color:#6a6a6a">0080</span>
<div class="a" style="left:751.9px;top:653px;width:403.2px;height:17px;background:#3a82dc"></div>
<div class="a" style="left:1180.3px;top:653px;width:142.8px;height:17px;background:#3a82dc"></div>
<span class="hx m" style="left:752.9px;top:654px;color:#fff">23 12 1b f4 1d 32 f9 74  6a 12 da 94 a6 0a 8d 64</span>
<span class="hx m" style="left:1181.3px;top:654px;color:#fff">#····2·t j······d</span>
<span class="hx m" style="left:702.5px;top:671px;color:#6a6a6a">0090</span>
<div class="a" style="left:751.9px;top:670px;width:394.8px;height:17px;background:#3a82dc"></div>
<div class="a" style="left:1171.9px;top:670px;width:142.8px;height:17px;background:#3a82dc"></div>
<span class="hx m" style="left:752.9px;top:671px;color:#fff">2a c7 b4 <span style="display:inline-block;width:8.4px;vertical-align:top"><span style="display:inline-block;transform:scaleX(0.52);transform-origin:0 0">ff</span></span> 60 ce f2 c5  c8 59 28 da 3e f6 06 74</span>
<span class="hx m" style="left:1172.9px;top:671px;color:#fff">*···`··· ·Y(·&gt;··t</span>
<span class="hx m" style="left:702.5px;top:688px;color:#6a6a6a">00a0</span>
<div class="a" style="left:751.9px;top:687px;width:403.2px;height:17px;background:#3a82dc"></div>
<div class="a" style="left:1180.3px;top:687px;width:142.8px;height:17px;background:#3a82dc"></div>
<span class="hx m" style="left:752.9px;top:688px;color:#fff">75 a7 77 4b a4 58 a5 70  35 d8 1a 7b dc ae c5 3e</span>
<span class="hx m" style="left:1181.3px;top:688px;color:#fff">u·wK·X·p 5··{···&gt;</span>
<span class="hx m" style="left:702.5px;top:705px;color:#6a6a6a">00b0</span>
<div class="a" style="left:751.9px;top:704px;width:403.2px;height:17px;background:#3a82dc"></div>
<div class="a" style="left:1180.3px;top:704px;width:142.8px;height:17px;background:#3a82dc"></div>
<span class="hx m" style="left:752.9px;top:705px;color:#fff">b3 24 ce 62 bd b6 d4 93  19 33 8b 93 45 bc 77 e6</span>
<span class="hx m" style="left:1181.3px;top:705px;color:#fff">·$·b···· ·3··E·w·</span>
<span class="hx m" style="left:702.5px;top:722px;color:#6a6a6a">00c0</span>
<div class="a" style="left:751.9px;top:721px;width:403.2px;height:17px;background:#3a82dc"></div>
<div class="a" style="left:1180.3px;top:721px;width:142.8px;height:17px;background:#3a82dc"></div>
<span class="hx m" style="left:752.9px;top:722px;color:#fff">17 6c aa df 52 df ef 92  4c 2a 7f 31 67 ba c2 d8</span>
<span class="hx m" style="left:1181.3px;top:722px;color:#fff">·l··R··· L*·1g···</span>
<span class="hx m" style="left:702.5px;top:739px;color:#6a6a6a">00d0</span>
<div class="a" style="left:751.9px;top:738px;width:403.2px;height:17px;background:#3a82dc"></div>
<div class="a" style="left:1180.3px;top:738px;width:142.8px;height:17px;background:#3a82dc"></div>
<span class="hx m" style="left:752.9px;top:739px;color:#fff">f8 de 86 52 34 ad 30 00  65 1e 2d be 21 b6 6c 64</span>
<span class="hx m" style="left:1181.3px;top:739px;color:#fff">···R4·0· e·-·!·ld</span>
<span class="hx m" style="left:702.5px;top:756px;color:#6a6a6a">00e0</span>
<div class="a" style="left:751.9px;top:755px;width:403.2px;height:17px;background:#3a82dc"></div>
<div class="a" style="left:1180.3px;top:755px;width:142.8px;height:17px;background:#3a82dc"></div>
<span class="hx m" style="left:752.9px;top:756px;color:#fff">85 e7 37 8c ac 46 87 90  52 47 db a2 33 5e c3 38</span>
<span class="hx m" style="left:1181.3px;top:756px;color:#fff">··7··F·· RG··3^·8</span>
<span class="hx m" style="left:702.5px;top:773px;color:#6a6a6a">00f0</span>
<div class="a" style="left:751.9px;top:772px;width:403.2px;height:17px;background:#3a82dc"></div>
<div class="a" style="left:1180.3px;top:772px;width:142.8px;height:17px;background:#3a82dc"></div>
<span class="hx m" style="left:752.9px;top:773px;color:#fff">44 11 ee 0b 4a 97 94 f4  fe 0e b4 d2 b3 c5 d6 56</span>
<span class="hx m" style="left:1181.3px;top:773px;color:#fff">D···J··· ·······V</span>
<div class="sb" style="left:1356px;top:568px;width:13px;height:226px"></div>
<div class="btn" style="left:1357px;top:568px;width:12px;height:13px"></div>
<svg class="a" style="left:1359px;top:572px" width="7" height="4"><path d="M0.5 3.5H6.5L3.5 0.5Z" fill="#444"/></svg>
<div class="btn" style="left:1357px;top:587px;width:12px;height:26px"></div>
<div class="btn" style="left:1357px;top:781px;width:12px;height:13px"></div>
<svg class="a" style="left:1359px;top:786px" width="7" height="4"><path d="M0.5 0.5H6.5L3.5 3.5Z" fill="#444"/></svg>
<svg class="a" style="left:23px;top:798px" width="16" height="16"><defs><radialGradient id="yl" cx="0.45" cy="0.35" r="0.6"><stop offset="0" stop-color="#ecea9c"/><stop offset="1" stop-color="#d2cf52"/></radialGradient></defs><circle cx="8" cy="8" r="6.4" fill="url(#yl)" stroke="#7f7d3c" stroke-width="1"/></svg>
<svg class="a" style="left:46px;top:798px" width="15" height="16"><rect x="0.5" y="1.5" width="11" height="13" fill="#f7f7f7" stroke="#b4b4b4"/><path d="M1 2H11V6H1Z" fill="#4aa3df"/><path d="M3 9H8M3 11.5H9" stroke="#c8c8c8"/><path d="M5 12L12.5 3.2L14 4.6L6.5 13.3L4.3 13.9Z" fill="#2f2f2f"/><path d="M12.5 3.2L13.4 2.2L14.9 3.6L14 4.6Z" fill="#888"/></svg>
<div class="a s" style="left:76px;top:798px;font-size:14px;line-height:18px;color:#1a1a1a;letter-spacing:-0.112px">Remaining payload in a packet (possibly PKN followed by encrypted payload) (quic.remaining_payload), 1,353 bytes</div>
<div class="a s" style="left:875px;top:798px;font-size:14px;line-height:18px;color:#1a1a1a;letter-spacing:-0.18px">Packets: 1085 · Displayed: 1085 (100.0%)</div>
<div class="a s" style="left:1249px;top:798px;font-size:14px;line-height:18px;color:#1a1a1a;letter-spacing:0.12px">Profile: Default</div>
<div class="a" style="left:862px;top:800px;width:1px;height:1px;background:#a8a8a8"></div>
<div class="a" style="left:862px;top:803px;width:1px;height:1px;background:#a8a8a8"></div>
<div class="a" style="left:862px;top:806px;width:1px;height:1px;background:#a8a8a8"></div>
<div class="a" style="left:862px;top:809px;width:1px;height:1px;background:#a8a8a8"></div>
<div class="a" style="left:862px;top:812px;width:1px;height:1px;background:#a8a8a8"></div>
<div class="a" style="left:1236px;top:800px;width:1px;height:1px;background:#a8a8a8"></div>
<div class="a" style="left:1236px;top:803px;width:1px;height:1px;background:#a8a8a8"></div>
<div class="a" style="left:1236px;top:806px;width:1px;height:1px;background:#a8a8a8"></div>
<div class="a" style="left:1236px;top:809px;width:1px;height:1px;background:#a8a8a8"></div>
<div class="a" style="left:1236px;top:812px;width:1px;height:1px;background:#a8a8a8"></div>
<div class="a" style="left:1367px;top:805px;width:1px;height:1px;background:#a8a8a8"></div>
<div class="a" style="left:1367px;top:808px;width:1px;height:1px;background:#a8a8a8"></div>
<div class="a" style="left:1364px;top:808px;width:1px;height:1px;background:#a8a8a8"></div>
<div class="a" style="left:1367px;top:811px;width:1px;height:1px;background:#a8a8a8"></div>
<div class="a" style="left:1364px;top:811px;width:1px;height:1px;background:#a8a8a8"></div>
<div class="a" style="left:1361px;top:811px;width:1px;height:1px;background:#a8a8a8"></div>
<div class="a" style="left:1367px;top:814px;width:1px;height:1px;background:#a8a8a8"></div>
<div class="a" style="left:1364px;top:814px;width:1px;height:1px;background:#a8a8a8"></div>
<div class="a" style="left:1361px;top:814px;width:1px;height:1px;background:#a8a8a8"></div>
<div class="a" style="left:1358px;top:814px;width:1px;height:1px;background:#a8a8a8"></div>
<div class="a" style="left:14px;top:816px;width:1356px;height:1px;background:#fdfdfd"></div>
</body></html>
